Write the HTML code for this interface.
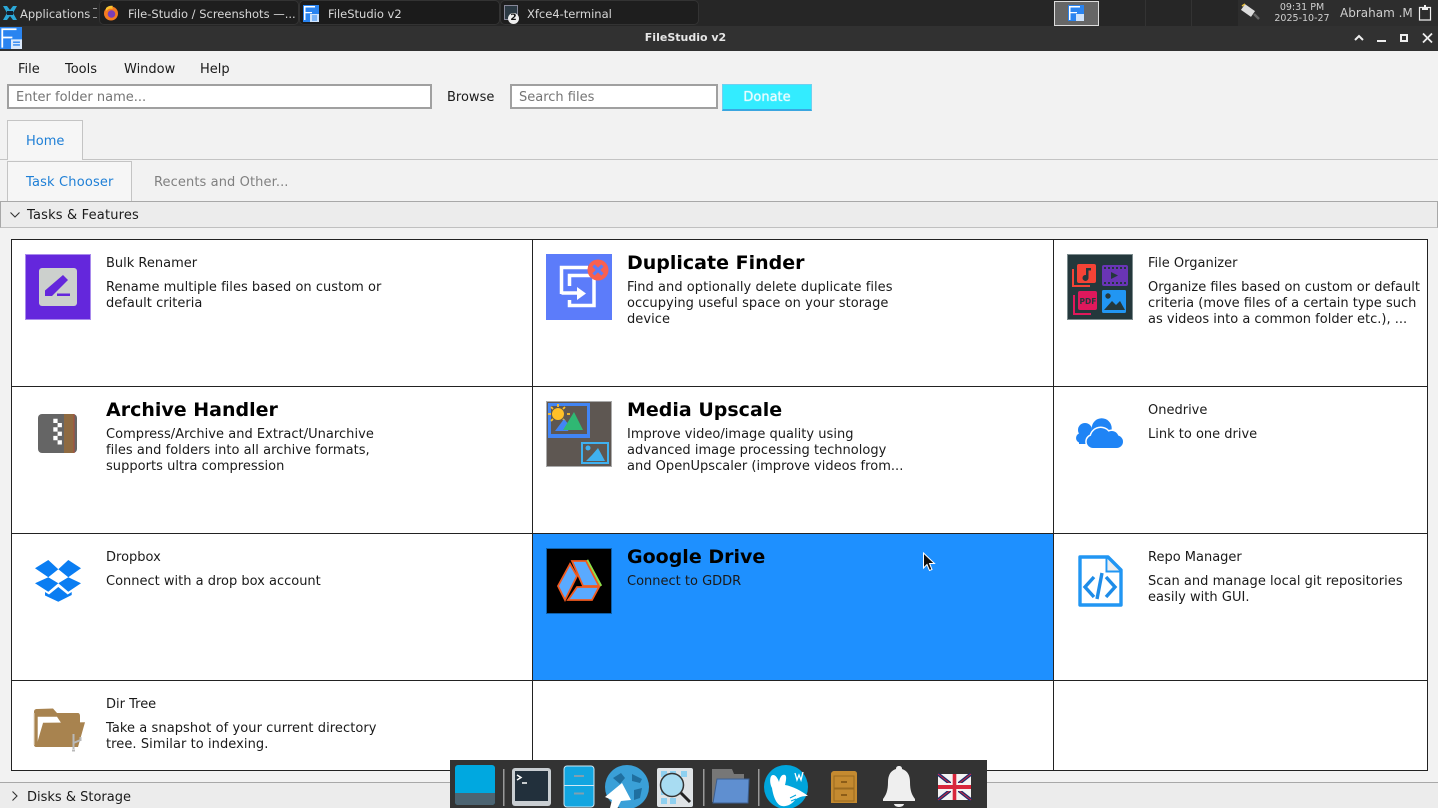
<!DOCTYPE html>
<html><head><meta charset="utf-8"><title>FileStudio v2</title>
<style>
html,body{margin:0;padding:0;width:1438px;height:808px;overflow:hidden;background:#f2f2f2;font-family:"DejaVu Sans",sans-serif;font-size:13px;color:#1a1a1a}
.a{position:absolute;white-space:nowrap}
.t{position:absolute;white-space:nowrap;line-height:16px;height:16px}
.d{position:absolute;line-height:16px;white-space:pre;font-size:13px;color:#1a1a1a}
.b{position:absolute;font-weight:bold;font-size:19px;line-height:24px;white-space:nowrap;color:#000}
.l{position:absolute;background:#222}
svg{position:absolute;display:block}
.tb{position:absolute;top:0;height:25px;border-radius:5px;background:#1e1e1e;border:1px solid #333;box-sizing:border-box}
.w{color:#d8d8d8;font-size:11.5px}
</style></head><body>

<!-- top panel -->
<div class="a" style="left:0;top:0;width:1438px;height:26px;background:#262626"></div>
<div class="a" style="left:1238px;top:0;width:200px;height:26px;background:#2d2d2d"></div>
<svg style="left:2px;top:5px" width="16" height="16" viewBox="0 0 16 16"><path d="M1 1h4l3 4 3-4h4l-4 7 4 7h-4l-3-4-3 4H1l4-7z" fill="#2ba8d8"/><path d="M5 6h6v4H5z" fill="#123"/></svg>
<div class="t w" style="left:20px;top:6px">Applications</div>
<div class="a" style="left:93px;top:8px;width:4px;height:10px;border-top:1px solid #999;border-bottom:1px solid #999;box-sizing:border-box"></div>
<div class="tb" style="left:99px;width:200px"></div>
<div class="tb" style="left:299px;width:201px;background:#1b1b1b"></div>
<div class="tb" style="left:500px;width:199px"></div>
<svg style="left:103px;top:5px" width="16" height="16" viewBox="0 0 16 16"><circle cx="8" cy="8.500" r="7" fill="#f47a20"/><circle cx="8.500" cy="9" r="3.800" fill="#7a3db8"/><path d="M3 3c2-2 5-2.600 7-2-1 1-1 2 0 3-3-1-5 0-7 2z" fill="#f9c22e"/></svg>
<div class="t w" style="left:128px;top:6px">File-Studio / Screenshots —...</div>
<svg style="left:303px;top:5px" width="16" height="17" viewBox="0 0 16 17"><rect width="16" height="17" fill="#2a84f0"/><path d="M1 1h11v1.500H2.500V7H9v1.300H2.500V15H1z" fill="#fff"/><rect x="7" y="9" width="9" height="8" fill="#cfe3fb"/><path d="M9 11h5M9 13h5M9 15h5" stroke="#2a84f0" fill="none"/></svg>
<div class="t w" style="left:328px;top:6px">FileStudio v2</div>
<div class="a" style="left:504px;top:5px;width:14px;height:15px;border:1px solid #889;background:#2c3a44;box-sizing:border-box"></div>
<div class="a" style="left:508px;top:13px;width:11px;height:11px;border-radius:6px;background:#eee;color:#111;font-size:9px;font-weight:bold;line-height:11px;text-align:center">2</div>
<div class="t w" style="left:527px;top:6px">Xfce4-terminal</div>
<div class="a" style="left:1054px;top:1px;width:45px;height:25px;background:#666;border:1px solid #ddd;box-sizing:border-box"></div>
<svg style="left:1068px;top:5px" width="16" height="16" viewBox="0 0 16 16"><rect width="16" height="16" fill="#2a84f0"/><path d="M1 1h11v1.500H2.500V7H9v1.300H2.500V15H1z" fill="#fff"/><rect x="8" y="9" width="8" height="7" fill="#cfe3fb"/></svg>
<div class="a" style="left:1145px;top:0;width:1px;height:26px;background:#333"></div>
<div class="a" style="left:1191px;top:0;width:1px;height:26px;background:#333"></div>
<svg style="left:1240px;top:3px" width="22" height="18" viewBox="0 0 22 18"><path d="M3 4l10 7" stroke="#ddd" stroke-width="7"/><path d="M14 11l5 5" stroke="#666" stroke-width="2.500"/><path d="M2 3l3-2" stroke="#e8c040" stroke-width="1.500"/></svg>
<div class="a" style="left:1272px;top:2px;width:60px;text-align:center;font-size:9.500px;line-height:11px;color:#cfcfcf">09:31 PM<br>2025-10-27</div>
<div class="t" style="left:1340px;top:5px;color:#cfcfcf;font-size:12px">Abraham .M</div>
<svg style="left:1418px;top:4px" width="14" height="18" viewBox="0 0 14 18"><path d="M1.500 3.500h11v12.500h-11z" fill="none" stroke="#eee" stroke-width="1.200"/><path d="M4 3h2V1h2v2h2v3H4z" fill="#eee"/></svg>

<!-- title bar -->
<div class="a" style="left:0;top:26px;width:1438px;height:25px;background:#313131"></div>
<svg style="left:0;top:27px" width="22" height="22" viewBox="0 0 16 16"><rect width="16" height="16" fill="#2a84f0"/><path d="M1 1h11v1.300H2.300V7H9v1.300H2.300V15H1z" fill="#fff"/><rect x="8" y="9" width="8" height="7" fill="#dbe9fb"/><path d="M9.500 11h5M9.500 13h5" stroke="#2a84f0" fill="none"/></svg>
<div class="a" style="left:0;top:30px;width:1371px;text-align:center;font-weight:bold;font-size:11px;line-height:16px;color:#e6e6e6">FileStudio v2</div>
<svg style="left:1350px;top:30px" width="86" height="16" viewBox="0 0 86 16"><path d="M5 10l4-4 4 4" stroke="#eee" stroke-width="2" fill="none"/><path d="M27 11h9" stroke="#eee" stroke-width="2"/><rect x="51" y="5" width="6" height="6" fill="none" stroke="#eee" stroke-width="2"/><path d="M73 3.500l9 9M82 3.500l-9 9" stroke="#eee" stroke-width="1.800"/></svg>

<!-- menu -->
<div class="t" style="left:18px;top:62px">File</div>
<div class="t" style="left:65px;top:62px">Tools</div>
<div class="t" style="left:124px;top:62px">Window</div>
<div class="t" style="left:200px;top:62px">Help</div>

<!-- toolbar -->
<div class="a" style="left:7px;top:84px;width:425px;height:25px;background:#fff;border:2px solid #a0a0a0;box-sizing:border-box"></div>
<div class="t" style="left:16px;top:90px;color:#757575">Enter folder name...</div>
<div class="t" style="left:447px;top:90px">Browse</div>
<div class="a" style="left:510px;top:84px;width:208px;height:25px;background:#fff;border:2px solid #a0a0a0;box-sizing:border-box"></div>
<div class="t" style="left:519px;top:90px;color:#757575">Search files</div>
<div class="a" style="left:722px;top:84px;width:90px;height:27px;background:#33ecff;border:1px solid #6fd0f0;border-bottom:2px solid #3aa6e0;box-sizing:border-box;text-align:center;line-height:26px;color:#eafcff;font-size:13px;text-shadow:0 0 1px #fff">Donate</div>

<!-- tabs -->
<div class="a" style="left:0;top:159px;width:1438px;height:1px;background:#c4c4c4"></div>
<div class="a" style="left:7px;top:120px;width:76px;height:40px;background:#f6f6f6;border:1px solid #c4c4c4;border-bottom:0;box-sizing:border-box"></div>
<div class="t" style="left:26px;top:134px;color:#1e7fd6">Home</div>
<div class="a" style="left:7px;top:161px;width:125px;height:41px;background:#f6f6f6;border:1px solid #c4c4c4;border-bottom:0;box-sizing:border-box"></div>
<div class="t" style="left:26px;top:175px;color:#1e7fd6;letter-spacing:.17px">Task Chooser</div>
<div class="t" style="left:154px;top:175px;color:#808080;letter-spacing:.1px">Recents and Other...</div>

<!-- section header -->
<div class="a" style="left:0;top:201px;width:1438px;height:27px;background:#ececec;border:1px solid #a8a8a8;border-bottom-color:#c0c0c0;box-sizing:border-box"></div>
<svg style="left:9px;top:209px" width="12" height="12" viewBox="0 0 12 12"><path d="M1.500 3.500L6 8l4.500-4.500" fill="none" stroke="#333" stroke-width="1.100"/></svg>
<div class="t" style="left:27px;top:208px;letter-spacing:.18px">Tasks &amp; Features</div>

<!-- grid -->
<div class="a" style="left:11px;top:239px;width:1417px;height:532px;background:#fff"></div>
<div class="a" style="left:533px;top:534px;width:520px;height:146px;background:#1e90ff"></div>
<div class="l" style="left:11px;top:239px;width:1417px;height:1px"></div>
<div class="l" style="left:11px;top:386px;width:1417px;height:1px"></div>
<div class="l" style="left:11px;top:533px;width:1417px;height:1px"></div>
<div class="l" style="left:11px;top:680px;width:1417px;height:1px"></div>
<div class="l" style="left:11px;top:770px;width:1417px;height:1px"></div>
<div class="l" style="left:11px;top:239px;width:1px;height:532px"></div>
<div class="l" style="left:532px;top:239px;width:1px;height:532px"></div>
<div class="l" style="left:1053px;top:239px;width:1px;height:532px"></div>
<div class="l" style="left:1427px;top:239px;width:1px;height:532px"></div>

<!-- Bulk Renamer -->
<svg style="left:25px;top:254px" width="66" height="66" viewBox="0 0 66 66"><rect width="66" height="66" fill="#6427dc"/><rect x=".5" y=".5" width="65" height="65" fill="none" stroke="#a98bec"/><rect x="14" y="14" width="38" height="38" rx="3" fill="#ccd0cd"/><path d="M20 36.500L38 21l5 5-16 16h-7z" fill="#6427dc"/><path d="M32 39.500h13v2.500H32z" fill="#6427dc"/></svg>
<div class="t" style="left:106px;top:256px">Bulk Renamer</div>
<div class="d" style="left:106px;top:280px;letter-spacing:.025px">Rename multiple files based on custom or
default criteria</div>

<!-- Duplicate Finder -->
<svg style="left:546px;top:254px" width="66" height="66" viewBox="0 0 66 66"><rect width="66" height="66" fill="#5c7cfa"/><path d="M15.500 40V13.500H42M15.500 39H32" fill="none" stroke="#fff" stroke-width="3.500"/><path d="M31 33l9 6.500-9 6.500z" fill="#fff"/><path d="M23.500 32V21.500h24.500v30H23.500V46" fill="none" stroke="#fff" stroke-width="3.500"/><circle cx="52" cy="16" r="10.500" fill="#f9604f"/><path d="M47.500 11.500l9 9M56.500 11.500l-9 9" stroke="#5c7cfa" stroke-width="3.200"/></svg>
<div class="b" style="left:627px;top:251px">Duplicate Finder</div>
<div class="d" style="left:627px;top:280px;letter-spacing:.05px">Find and optionally delete duplicate files
occupying useful space on your storage
device</div>

<!-- File Organizer -->
<svg style="left:1067px;top:254px" width="66" height="66" viewBox="0 0 66 66"><rect width="66" height="66" fill="#24383c"/><rect x=".5" y=".5" width="65" height="65" fill="none" stroke="#7d8c8e"/>
<path d="M5 15h2v16h16v2H5z" fill="#f44336"/><rect x="10" y="10" width="19" height="19" rx="2" fill="#f44336"/><path d="M19 14h5v2.500h-2.500V24a3 3 0 1 1-2.500-3z" fill="#24383c"/>
<rect x="35" y="11" width="26" height="21" rx="2" fill="#6a35b5"/><path d="M37 14h2M41 14h2M45 14h2M49 14h2M53 14h2M57 14h2M37 29h2M41 29h2M45 29h2M49 29h2M53 29h2M57 29h2" stroke="#24383c" stroke-width="2"/><path d="M44 18l7 3.500-7 3.500z" fill="#24383c"/>
<path d="M6 41h2v18h16v2H6z" fill="#e0185c"/><rect x="11" y="37" width="19" height="19" rx="2" fill="#e0185c"/><text x="12.500" y="50" font-family="DejaVu Sans, sans-serif" font-size="7.500" font-weight="bold" fill="#24383c">PDF</text>
<rect x="35" y="36" width="24" height="23" rx="1.500" fill="#2196f3"/><circle cx="41" cy="42" r="2.700" fill="#24383c"/><path d="M37 56l8-9 4 4 4-4 5 9z" fill="#24383c"/></svg>
<div class="t" style="left:1148px;top:256px">File Organizer</div>
<div class="d" style="left:1148px;top:280px">Organize files based on custom or default
criteria (move files of a certain type such
as videos into a common folder etc.), ...</div>

<!-- Archive Handler -->
<svg style="left:38px;top:414px" width="39" height="39" viewBox="0 0 39 39"><rect width="39" height="39" rx="4" fill="#656565"/><rect x="26" width="10" height="39" fill="#8e6a41"/><rect x="35.500" width="1" height="39" fill="#b04a3c"/><path d="M15.300 4.700h4.300V9h-4.300zM19.600 9h4.300v4.300h-4.300zM15.300 13.300h4.300v4.300h-4.300zM19.600 17.600h4.300v4.300h-4.300zM15.300 21.900h4.300v4.300h-4.300zM19.600 26.200h4.300v4.300h-4.300z" fill="#fff"/></svg>
<div class="b" style="left:106px;top:398px">Archive Handler</div>
<div class="d" style="left:106px;top:427px;letter-spacing:.03px">Compress/Archive and Extract/Unarchive
files and folders into all archive formats,
supports ultra compression</div>

<!-- Media Upscale -->
<svg style="left:546px;top:401px" width="66" height="66" viewBox="0 0 66 66"><rect width="66" height="66" fill="#5e5752"/><rect x=".5" y=".5" width="65" height="65" fill="none" stroke="#aaa"/><rect x="2" y="2" width="42" height="35" fill="#4285f4"/><rect x="5" y="5" width="36" height="28" fill="#5e5752"/><circle cx="12" cy="13" r="6" fill="#ffc028"/><path d="M12 3v3M2 13h3M21 13h3M5 6l2 2M19 6l-2 2M5 20l2-2M19 20l-2-2" stroke="#ffc028" stroke-width="1.800"/><path d="M9 30l9-12 6 7-2 5z" fill="#4285f4"/><path d="M17 29l11-18 9 18z" fill="#2fb873"/><rect x="36" y="42" width="26" height="20" fill="none" stroke="#3fb1f0" stroke-width="2"/><circle cx="42" cy="47" r="2.500" fill="#3fb1f0"/><path d="M40 60l6-6 6-7 7 13z" fill="#3fb1f0"/></svg>
<div class="b" style="left:627px;top:398px">Media Upscale</div>
<div class="d" style="left:627px;top:427px;letter-spacing:.02px">Improve video/image quality using
advanced image processing technology
and OpenUpscaler (improve videos from...</div>

<!-- Onedrive -->
<svg style="left:1076px;top:417px" width="48" height="32" viewBox="0 0 48 32"><g fill="#1f84f5"><circle cx="25.700" cy="11.300" r="10"/><circle cx="9" cy="13" r="7"/><circle cx="5" cy="21" r="5"/><rect x="3" y="13" width="22" height="14"/></g><g fill="#fff" stroke="#fff" stroke-width="3"><circle cx="24.700" cy="21" r="10"/><circle cx="35.700" cy="21" r="7"/><circle cx="40.700" cy="24.700" r="6.300"/><circle cx="17" cy="24.700" r="6.300"/></g><g fill="#1f84f5"><circle cx="24.700" cy="21" r="10"/><circle cx="35.700" cy="21" r="7"/><circle cx="40.700" cy="24.700" r="6.300"/><circle cx="17" cy="24.700" r="6.300"/><rect x="17" y="24" width="24" height="7"/></g></svg>
<div class="t" style="left:1148px;top:403px">Onedrive</div>
<div class="d" style="left:1148px;top:427px">Link to one drive</div>

<!-- Dropbox -->
<svg style="left:35px;top:560px" width="46" height="43" viewBox="0 0 46 43"><g fill="#0a7df2"><path d="M13.300 0L0 8.300l13.300 9 10-8zM33.300 0l-10 9.300 10 8 12.700-9zM13.300 17.300L0 23.300l13.300 8.400 10-8.400zM33.300 17.300L46 23.300l-12.700 8.400-10-8.400zM23.300 27l-9.300 7.500L10 32v3.500l13.300 6.200 13.400-6.700V32l-4 2.500z"/></g></svg>
<div class="t" style="left:106px;top:550px">Dropbox</div>
<div class="d" style="left:106px;top:574px">Connect with a drop box account</div>

<!-- Google Drive -->
<svg style="left:546px;top:548px" width="66" height="66" viewBox="0 0 66 66"><rect width="66" height="66" fill="#000"/><rect x=".5" y=".5" width="65" height="65" fill="none" stroke="#0f5fa8"/><path d="M41 12l14 26" stroke="#8ee04a" stroke-width="2.500" fill="none"/><path d="M26 13h14l13 25H37z" fill="#5aaaff" stroke="#f15a1f" stroke-width="1.800"/><path d="M24 16l7 12-12 24-7-14z" fill="#5aaaff" stroke="#f15a1f" stroke-width="1.800"/><path d="M31 39h22l-7 13H22z" fill="#5aaaff" stroke="#f15a1f" stroke-width="1.800"/></svg>
<div class="b" style="left:627px;top:545px">Google Drive</div>
<div class="d" style="left:627px;top:574px">Connect to GDDR</div>

<!-- Repo Manager -->
<svg style="left:1078px;top:555px" width="45" height="52" viewBox="0 0 45 52"><path d="M30 3v13h13z" fill="#ededed"/><path d="M2 2h28l13 13v35H2z" fill="none" stroke="#2196f3" stroke-width="3.400" stroke-linejoin="round"/><path d="M28.500 2v14.500H43" fill="none" stroke="#2196f3" stroke-width="2"/><path d="M16 22L7 32l9 10M28 22l9 10-9 10M24 18l-5 26" fill="none" stroke="#1e8ce8" stroke-width="3.400"/></svg>
<div class="t" style="left:1148px;top:550px">Repo Manager</div>
<div class="d" style="left:1148px;top:574px;letter-spacing:.03px">Scan and manage local git repositories
easily with GUI.</div>

<!-- Dir Tree -->
<svg style="left:33px;top:707px" width="54" height="46" viewBox="0 0 54 46"><path d="M1 5c0-2 1-3 3-3l16-.500L24 6h21c1 0 2 1 2 3v7H5v24H3c-1 0-2-1-2-2z" fill="#a8834f"/><path d="M4.700 9.700H24l4 6H10L4.700 36z" fill="#fff"/><path d="M10 16l42-.700L45 40H3z" fill="#a8834f"/><path d="M1 6v32" stroke="#e9dccb" stroke-width="1"/><path d="M40.500 27v15M40.500 36l7-3M47.500 30v4M39 43.500h3" stroke="#b9b9b9" stroke-width="2" fill="none"/></svg>
<div class="t" style="left:106px;top:697px">Dir Tree</div>
<div class="d" style="left:106px;top:721px;letter-spacing:.07px">Take a snapshot of your current directory
tree. Similar to indexing.</div>

<!-- bottom section -->
<div class="a" style="left:0;top:782px;width:1438px;height:26px;background:#ececec;border-top:1px solid #a8a8a8;box-sizing:border-box"></div>
<svg style="left:9px;top:790px" width="12" height="12" viewBox="0 0 12 12"><path d="M3.500 1.500L8 6l-4.500 4.500" fill="none" stroke="#333" stroke-width="1.100"/></svg>
<div class="t" style="left:27px;top:790px">Disks &amp; Storage</div>

<!-- cursor -->
<svg style="left:922px;top:552px" width="14" height="21" viewBox="0 0 14 21"><path d="M1.500 1v15l3.500-3.500 2.500 6 2.500-1-2.500-6h5z" fill="#111" stroke="#fff" stroke-width="1"/></svg>

<!-- dock -->
<div class="a" style="left:450px;top:760px;width:537px;height:48px;background:#333"></div>
<svg style="left:450px;top:760px" width="537" height="48" viewBox="0 0 537 48">
<rect x="5" y="5" width="40" height="40" rx="3" fill="#00a8e0"/><path d="M5 33h40v9a3 3 0 0 1-3 3H8a3 3 0 0 1-3-3z" fill="#4d6472"/>
<rect x="53" y="9" width="1.500" height="37" fill="#999"/>
<rect x="62" y="8" width="39" height="38" rx="3" fill="#c9ced2"/><rect x="65" y="11" width="33" height="30" fill="#22303c"/><path d="M67 15l4 2.500-4 2.500M72 23h5" stroke="#fff" stroke-width="1.500" fill="none"/>
<rect x="114" y="6" width="30" height="41" rx="3" fill="#12a5e0" stroke="#cfe8f5"/><path d="M114 25.500h30" stroke="#cfe8f5"/><path d="M124 16h10M124 33.500h10" stroke="#7fa0b0" stroke-width="2"/>
<circle cx="177" cy="27" r="22" fill="#3aa0d8"/><path d="M163 18l8-5 4 5-5 6zM182 14l10 5-2 4-8-2zM184 30l8-2-2 10-6 2z" fill="#1f6fa0"/><path d="M172 23L155 37l7 3-2 8 7 1 4-8 10-1z" fill="#fff"/>
<rect x="207" y="8" width="36" height="39" rx="2" fill="#dfe3e6"/><g fill="#8fd0f0"><rect x="211" y="11" width="6" height="6"/><rect x="211" y="20" width="6" height="6"/><rect x="211" y="29" width="6" height="6"/><rect x="231" y="11" width="6" height="6"/><rect x="220" y="11" width="6" height="6"/><rect x="220" y="38" width="6" height="6"/><rect x="211" y="38" width="6" height="6"/></g><circle cx="222" cy="25" r="11.500" fill="#a8dcf2" stroke="#333" stroke-width="1.500"/><path d="M231 33l9 9" stroke="#222" stroke-width="3"/>
<rect x="253" y="9" width="1.500" height="37" fill="#999"/>
<path d="M262 9h20l2 5h10v28h-32z" fill="#777"/><path d="M267 19h32l-1 24h-35z" fill="#5f8fd0" stroke="#3c5f90"/>
<rect x="308" y="9" width="1.500" height="37" fill="#999"/>
<circle cx="336" cy="27" r="22" fill="#00a5dc"/><path d="M322 28C319 22 320 15 323 15C326 15 328 19 329 22C330 17 332 14 335 15C337 16 336 21 335 25C342 26 352 31 358 36C352 36 350 37 346 39C342 44 337 47 332 46C326 45 323 35 322 28z" fill="#fff"/><path d="M340 38l6-3M341 41l5-2" stroke="#00a5dc" stroke-width="1"/><path d="M345 13l2 7 2-5 2 5 2-8" stroke="#fff" stroke-width="1.300" fill="none"/>
<path d="M381 14c0-2 2-3 3-3h20c2 0 3 1 3 3v29h-26z" fill="#c48a30"/><rect x="384" y="16" width="20" height="12" fill="none" stroke="#9a6a20"/><rect x="384" y="29" width="20" height="12" fill="none" stroke="#9a6a20"/><path d="M391 22h6M391 35h6" stroke="#7a4e10" stroke-width="1.500"/>
<g transform="translate(0 2)"><path d="M449 4c2 0 3 1 3 3 6 2 8 7 8 13 0 9 2 13 5 17v2h-32v-2c3-4 5-8 5-17 0-6 2-11 8-13 0-2 1-3 3-3z" fill="#efefef"/><path d="M444 42a5 3 0 0 0 10 0z" fill="#efefef"/></g>
<rect x="488" y="14" width="33" height="26" fill="#f4f4f4"/><path d="M488 14l33 26M521 14l-33 26" stroke="#1c2f6e" stroke-width="3.500"/><path d="M488 14l33 26M521 14l-33 26" stroke="#d8263c" stroke-width="1"/><rect x="501" y="14" width="7" height="26" fill="#f4f4f4"/><rect x="488" y="23" width="33" height="8" fill="#f4f4f4"/><rect x="502.700" y="14" width="3.600" height="26" fill="#d8263c"/><rect x="488" y="25" width="33" height="4" fill="#d8263c"/>
</svg>

</body></html>
